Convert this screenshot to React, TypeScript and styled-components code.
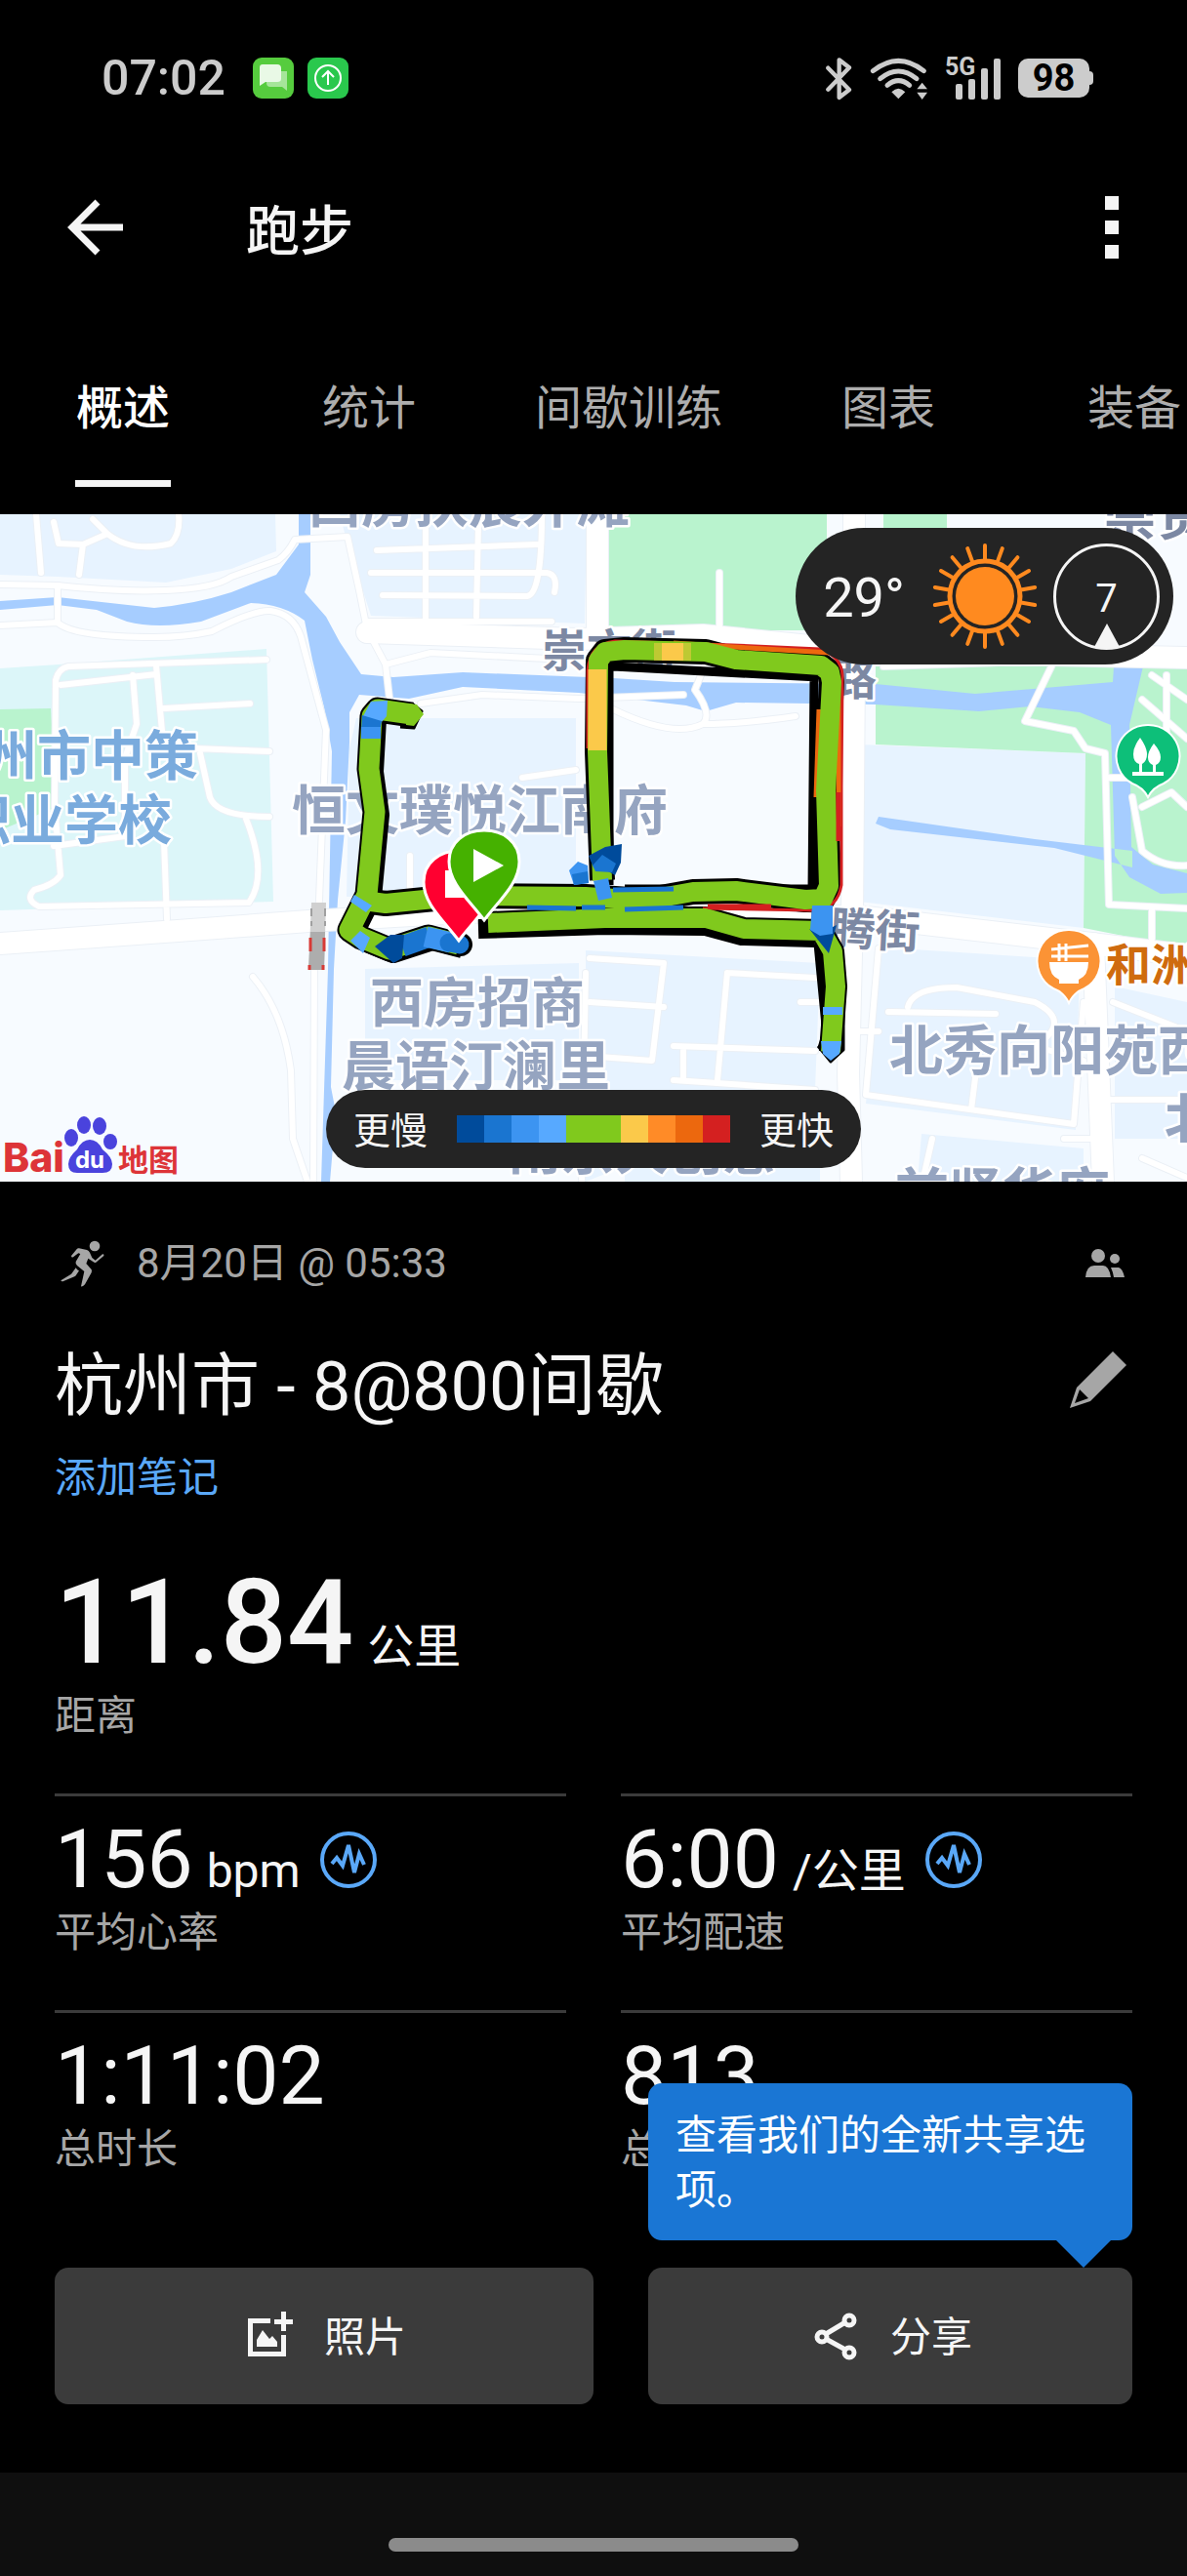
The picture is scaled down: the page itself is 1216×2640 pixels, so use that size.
import React from "react";
import styled, { createGlobalStyle } from "styled-components";

const white = "#f5f5f5";
const muted = "#a6a6a6";
const panel = "#3b3b3b";
const accent = "#1a76d4";
const link = "#5aa8f8";

const GlobalStyle = createGlobalStyle`
  * { box-sizing: border-box; }
  html, body { margin: 0; background: #000; }
  body, button, input {
    font-family: Roboto, "Noto Sans CJK SC", sans-serif;
  }
  button {
    margin: 0;
    padding: 0;
    border: 0;
    background: none;
    color: inherit;
    cursor: pointer;
  }
  svg { display: block; flex: none; }
`;

const Page = styled.div`
  display: flex;
  flex-direction: column;
  min-height: 100vh;
  color: ${white};
  background: #000;
  overflow: hidden;
`;

/* ---------- status bar ---------- */

const StatusBar = styled.div`
  display: flex;
  justify-content: space-between;
  align-items: center;
  height: 160px;
  padding: 0 96px 0 104px;
  color: #cccccc;
`;

const StatusGroup = styled.div<{ $gap: number }>`
  display: flex;
  align-items: center;
  gap: ${(p) => p.$gap}px;
`;

const Clock = styled.time`
  margin-right: 14px;
  font-size: 50px;
  line-height: 56px;
  font-weight: 500;
`;

const Battery = styled.div`
  display: flex;
  align-items: center;

  &::after {
    content: "";
    width: 4px;
    height: 14px;
    border-radius: 0 4px 4px 0;
    background: #cccccc;
  }
`;

const BatteryLevel = styled.span`
  width: 73px;
  border-radius: 10px;
  background: #cccccc;
  color: #000;
  font-size: 38px;
  line-height: 40px;
  font-weight: 700;
  text-align: center;
`;

/* ---------- header and tabs ---------- */

const Header = styled.header`
  display: flex;
  align-items: center;
  height: 146px;
  padding: 0 56px;
`;

const HeaderTitle = styled.h1`
  flex: 1;
  margin: 0 0 0 112px;
  padding-top: 8px;
  font-size: 55px;
  line-height: 72px;
  font-weight: 500;
`;

const IconButton = styled.button`
  display: flex;
  flex: none;
`;

const MenuButton = styled(IconButton)`
  padding: 0 14px;
`;

const Tabs = styled.nav`
  display: flex;
  overflow: hidden;
`;

const Tab = styled.button<{ $active?: boolean }>`
  display: flex;
  flex: none;
  flex-direction: column;
  align-items: center;
  min-width: 252px;
  padding: 77px 44px 28px;
  color: ${(p) => (p.$active ? "#ffffff" : "#adadad")};
  font-size: 48px;
  line-height: 72px;
  font-weight: ${(p) => (p.$active ? 500 : 400)};

  &::after {
    content: "";
    width: 98px;
    height: 7px;
    margin-top: 37px;
    background: ${(p) => (p.$active ? white : "transparent")};
  }
`;

/* ---------- map ---------- */

const MapPanel = styled.section`
  position: relative;
  height: 684px;
  background: #f7fbff;
  overflow: hidden;
`;

const MapDrawing = styled.svg`
  width: 100%;
  height: 100%;
`;

const Pill = styled.div`
  display: flex;
  align-items: center;
  border-radius: 70px;
  background: #242424;
`;

const Weather = styled(Pill)`
  position: absolute;
  top: 14px;
  right: 14px;
  height: 140px;
  padding: 0 14px 0 28px;
  gap: 16px;
`;

const Temperature = styled.span`
  margin-right: 12px;
  padding-top: 4px;
  font-size: 56px;
  line-height: 64px;
`;

const Wind = styled.div`
  position: relative;
  display: grid;
  place-items: center;
  width: 109px;
  height: 109px;
  padding-top: 6px;
  border: 3px solid ${white};
  border-radius: 50%;
  font-size: 40px;
  line-height: 40px;

  &::after {
    content: "";
    position: absolute;
    bottom: 0;
    left: calc(50% - 13px);
    border: 13px solid transparent;
    border-top-width: 0;
    border-bottom: 24px solid ${white};
  }
`;

const LegendAnchor = styled.div`
  position: absolute;
  bottom: 14px;
  left: 0;
  right: 0;
  display: flex;
  justify-content: center;
`;

const Legend = styled(Pill)`
  height: 80px;
  padding: 0 28px;
  gap: 30px;
  font-size: 38px;
  line-height: 56px;
`;

const LegendText = styled.span`
  padding-top: 4px;
`;

const Scale = styled.div`
  display: flex;
  height: 28px;
`;

const Swatch = styled.span<{ $color: string }>`
  width: 28px;
  background: ${(p) => p.$color};
`;

const MapLogo = styled.div`
  position: absolute;
  left: 4px;
  bottom: 4px;
`;

/* ---------- details ---------- */

const Details = styled.main`
  flex: 1;
  padding: 56px 56px 70px;
`;

const MetaRow = styled.div`
  display: flex;
  align-items: center;
  gap: 26px;
  color: ${muted};
  font-size: 42px;
  line-height: 56px;
`;

const MetaDate = styled.span`
  flex: 1;
`;

const TitleRow = styled.div`
  display: flex;
  justify-content: space-between;
  align-items: flex-start;
  margin-top: 56px;
`;

const Title = styled.h2`
  margin: 0;
  font-size: 70px;
  line-height: 84px;
  font-weight: 400;
`;

const NoteLink = styled.a`
  display: block;
  width: max-content;
  margin-top: 24px;
  color: ${link};
  font-size: 42px;
  line-height: 56px;
  text-decoration: none;
`;

const Label = styled.div`
  color: ${muted};
  font-size: 42px;
  line-height: 56px;
`;

const Unit = styled.span`
  font-size: 48px;
  line-height: 56px;
  font-weight: 400;
`;

const Distance = styled.div`
  display: flex;
  align-items: baseline;
  gap: 14px;
  height: 120px;
  margin: 60px 0 8px;
  font-size: 120px;
  line-height: 120px;
  font-weight: 500;
`;

const Stats = styled.div`
  display: grid;
  grid-template-columns: 1fr 1fr;
  gap: 51px 56px;
  margin-top: 51px;
`;

const Stat = styled.div`
  padding-top: 23px;
  border-top: 3px solid ${panel};
`;

const StatRow = styled.div`
  display: flex;
  align-items: center;
  gap: 20px;
  height: 84px;
  margin-bottom: 5px;
`;

const StatValue = styled.div`
  display: flex;
  align-items: baseline;
  gap: 14px;
  font-size: 84px;
  line-height: 84px;
`;

const Actions = styled.div`
  display: grid;
  grid-template-columns: 552fr 496fr;
  gap: 56px;
  margin-top: 93px;
`;

const ActionSlot = styled.div`
  position: relative;
`;

const Action = styled.button`
  display: flex;
  justify-content: center;
  align-items: center;
  gap: 28px;
  width: 100%;
  height: 140px;
  border-radius: 14px;
  background: ${panel};
  font-size: 42px;
  line-height: 56px;
`;

const ActionText = styled.span`
  padding-top: 4px;
`;

const Tooltip = styled.div`
  position: absolute;
  left: 0;
  right: 0;
  bottom: calc(100% + 28px);
  padding: 26px 28px 23px;
  border-radius: 14px;
  background: ${accent};
  color: #fff;
  font-size: 42px;
  line-height: 56px;

  &::after {
    content: "";
    position: absolute;
    top: 100%;
    right: 22px;
    border: 28px solid transparent;
    border-top-color: ${accent};
    border-bottom-width: 0;
  }
`;

const NavBar = styled.footer`
  display: flex;
  justify-content: center;
  height: 106px;
  padding-top: 67px;
  background: #0f0f0f;
`;

const NavHandle = styled.div`
  width: 420px;
  height: 14px;
  border-radius: 7px;
  background: #8b8b8b;
`;

/* ---------- icons ---------- */

const MessageIcon = () => (
  <svg width="42" height="42" viewBox="0 0 42 42">
    <rect width="42" height="42" rx="9" fill="#56cc3e" />
    <path d="M14 14h21v20l-5-4H18q-4 0-4-4z" fill="#a6e59a" />
    <path d="M10 7h15q4 0 4 4v11q0 3-4 3H13l-6 4V10q0-3 3-3z" fill="#e9f9e6" />
  </svg>
);

const UploadIcon = () => (
  <svg width="42" height="42" viewBox="0 0 42 42">
    <rect width="42" height="42" rx="9" fill="#2ac84d" />
    <g fill="none" stroke="#fff" strokeWidth="2">
      <circle cx="21" cy="21" r="13" />
      <path d="M21 28V14M15 20l6-6 6 6" />
    </g>
  </svg>
);

const BluetoothIcon = () => (
  <svg width="27" height="45" viewBox="0 0 81 135" fill="none" stroke="#ccc" strokeWidth="13" strokeLinecap="round" strokeLinejoin="round">
    <path d="M7 35 72 102 41 126V10L72 34 7 101" />
  </svg>
);

const WifiIcon = () => (
  <svg width="60" height="45" viewBox="0 0 180 135">
    <g fill="none" stroke="#ccc" strokeWidth="15" strokeLinecap="round">
      <path d="M10 44Q88-18 166 44" />
      <path d="M32 68Q88 22 144 68" />
      <path d="M54 88Q88 60 122 88" />
    </g>
    <path d="M88 130 67 109Q88 88 109 109zM161 80l16 20h-32zM161 132l16-22h-32z" fill="#ccc" />
  </svg>
);

const SignalIcon = () => (
  <svg width="56" height="45" viewBox="0 0 56 45" fill="#ccc" overflow="visible">
    <text x="-1" y="19" fontFamily="Roboto, sans-serif" fontWeight="700" fontSize="25">5G</text>
    <rect x="10" y="28" width="7" height="16" rx="2" />
    <rect x="23" y="23" width="7" height="21" rx="2" />
    <rect x="36" y="12" width="7" height="32" rx="2" />
    <rect x="49" y="2" width="7" height="42" rx="2" />
  </svg>
);

const BackIcon = () => (
  <svg width="84" height="84" viewBox="0 0 84 84" fill="none" stroke={white} strokeWidth="7">
    <path d="M70 42H18M44 16 18 42l26 26" />
  </svg>
);

const MoreIcon = () => (
  <svg width="14" height="64" viewBox="0 0 14 64" fill={white}>
    <path d="M0 0h14v14H0zM0 25h14v14H0zM0 50h14v14H0z" />
  </svg>
);

const SunIcon = () => (
  <svg width="108" height="108" viewBox="-54 -54 108 108">
    <circle r="30" fill="#ff8a1f" />
    <circle r="36" fill="none" stroke="#ff8a1f" strokeWidth="5" />
    {Array.from({ length: 18 }, (_, i) => (
      <path key={i} d="M0-36V-52" stroke="#ff8a1f" strokeWidth="4" strokeLinecap="round" transform={`rotate(${i * 20})`} />
    ))}
  </svg>
);

const RunnerIcon = () => (
  <svg width="58" height="56" viewBox="-21 0 174 168" fill={muted}>
    <circle cx="102" cy="30" r="16" />
    <path d="M48 38Q50 36 54 37L78 42Q84 44 87 50L94 66 104 74 126 55Q132 54 130 60L106 80Q102 82 98 79L82 68 76 84 92 102Q94 106 92 112L72 148Q66 156 60 154L70 108 48 90Q42 84 44 78L58 54 52 52 36 64Q30 66 30 60z" />
    <path d="M44 97Q48 104 54 106L46 118Q44 122 40 124L6 138Q0 140-2 136L30 116z" />
  </svg>
);

const PeopleIcon = () => (
  <svg width="56" height="56" viewBox="0 0 56 56" fill={muted}>
    <circle cx="21" cy="20" r="7" />
    <circle cx="38" cy="23" r="5" />
    <path d="M8 42Q9 30 17 30h9q6 0 8 12zM34 32h8q4 1 6 10H37q-1-6-3-10z" />
  </svg>
);

const PencilIcon = () => (
  <svg width="70" height="70" viewBox="0 0 70 70">
    <path d="M50 6 64 20 27 57 6 64 13 43z" fill={muted} />
    <path d="M16 45 25 54 11 59z" fill="#000" />
  </svg>
);

const PulseIcon = () => (
  <svg width="58" height="58" viewBox="0 0 58 58" fill="none" stroke={link}>
    <circle cx="29" cy="29" r="27" strokeWidth="4" />
    <path d="M12 33l5-6 6 8 6-21 6 28 5-19 5 11" strokeWidth="4" />
  </svg>
);

const PhotoIcon = () => (
  <svg width="56" height="56" viewBox="0 0 56 56" fill={white}>
    <path d="M6 10h23v5H11v29h29V27h5v22H6zM40 3h5v8h7v5h-7v7h-5v-7h-7v-5h7zM15 39v-7l6-10 7 9 3-3 5 6v5z" />
  </svg>
);

const ShareIcon = () => (
  <svg width="56" height="56" viewBox="0 0 56 56" fill="none" stroke={white} strokeWidth="5">
    <path d="M18 26 38 14M18 31 38 42" />
    <circle cx="14" cy="29" r="5" />
    <circle cx="42" cy="12" r="5" />
    <circle cx="42" cy="45" r="5" />
  </svg>
);

const BaiduLogo = () => (
  <svg width="182" height="64" viewBox="0 0 182 64" role="img" aria-label="Baidu 地图">
    <g fontFamily='Inter, "Noto Sans CJK SC", sans-serif'>
      <text x="-1" y="58" fontSize="41" fontWeight="800" fill="#dd3438">Bai</text>
      <g fill="#4a43dd">
        <ellipse cx="69" cy="23" rx="7" ry="9" />
        <ellipse cx="82" cy="10" rx="7" ry="9" />
        <ellipse cx="98" cy="11" rx="7" ry="9" />
        <ellipse cx="109" cy="27" rx="7" ry="8" />
        <path d="M88 25q8 0 13 10 10 8 10 15 0 9-10 9H75q-9 0-9-9 0-7 9-15 5-10 13-10z" />
      </g>
      <text x="88" y="54" fontSize="24" fontWeight="700" fill="#fff" textAnchor="middle">du</text>
      <text x="117" y="57" fontSize="31" fontWeight="700" fill="#dd3438">地图</text>
    </g>
  </svg>
);

/* ---------- map artwork ---------- */

type Place = { text: string; x: number; y: number; size?: number; color?: string; turn?: number };

const grey = "#95a4c0";
const slate = "#7c88a3";
const school = "#7aabdd";

const places: Place[] = [
  { text: "西房扶宸外滩", x: 315, y: 8 },
  { text: "杭州市中策", x: -72, y: 267, color: school },
  { text: "职业学校", x: -44, y: 333, color: school },
  { text: "恒文璞悦江南府", x: 299, y: 323 },
  { text: "西房招商", x: 379, y: 520 },
  { text: "晨语汀澜里", x: 350, y: 585 },
  { text: "南京大创意", x: 520, y: 671 },
  { text: "前贤华府", x: 917, y: 715 },
  { text: "北秀向阳苑西", x: 911, y: 569 },
  { text: "北", x: 1193, y: 639 },
  { text: "崇贤", x: 1130, y: 21, color: slate },
  { text: "崇文街", x: 555, y: 156, size: 46, color: slate },
  { text: "路", x: 852, y: 185, size: 46, color: slate },
  { text: "飞腾街", x: 804, y: 438, size: 46, color: slate, turn: 3 },
  { text: "和洲", x: 1133, y: 478, size: 46, color: "#cf6b0e" },
];

const wideRoads = [
  "M0 440 182 427 316 417 475 408 620 404 887 413 1110 439 1216 452",
  "M376 121 593 128 720 124 880 140 1216 147",
  "M875 0V160L873 410 869 573 872 684",
  "M612 0V120",
  "M1120 440 1130 684",
];

const roads = [
  "M0 72 59 73Q120 80 170 78T237 64L285 47Q295 40 302 26L356 23 368 78 376 118 395 154 399 189",
  "M0 114 59 111Q75 126 158 126 190 126 217 120 260 98 277 99 300 102 308 125L334 221 327 395 322 466 321 684",
  "M37 0 42 60",
  "M59 73V111",
  "M81 62 85 31 60 30 55 8M85 31 110 20 95 5M110 20Q135 40 175 30 185 20 183 0",
  "M386 37 550 31M380 60 560 60Q572 62 568 80M392 83 540 84Q555 82 555 0M376 110 565 110M436 10V120M490 10 488 105",
  "M395 154 441 142 600 150",
  "M431 194 494 185 593 189 700 185",
  "M56 300 57 170Q60 158 70 156L273 149M62 175 160 164M160 155 168 245M168 199 256 194M136 165 140 215 128 250V330L55 340M200 240 276 243M205 245 215 290Q222 310 276 310M56 300 62 370Q55 380 35 385 25 395 40 402L255 398Q275 370 252 312M168 335 171 415",
  "M259 474Q290 510 298 570L300 640 315 684",
  "M535 270 590 262M420 350V385",
  "M604 455 680 460 668 560 600 555M604 500 680 505M745 470 835 475M745 470 735 580M690 545 835 550M690 580 835 590M820 500H840M700 550V580",
  "M737 60V120M724 150 712 180Q730 205 720 215 690 230 628 200M720 215Q760 215 815 207",
  "M905 156 1080 150 1050 212 1100 222 1112 240 1132 245 1136 400 1216 404M1136 270 1170 270M1180 405V435M1160 290 1170 345Q1190 362 1216 360M1170 300 1200 285 1216 300M1170 190 1216 230M1195 165V240M1180 165 1216 190",
  "M900 445 887 595 1100 625 1110 500M930 505Q935 485 980 485L1060 500Q1100 520 1060 545L1110 560M910 510 1020 512M1000 570 995 610M1140 500 1216 530M1135 600H1216M955 640 945 684M1090 640H1130M1170 660 1216 680",
  "M600 470 596 684M875 530H900M608 640 850 650",
];

const pace = {
  green: "#80c91d",
  yellow: "#fbc94a",
  orange: "#ec680e",
  red: "#d42020",
  navy: "#004b9b",
  blue: "#1a75d0",
  sky: "#3c94f1",
  light: "#57a9ff",
};

const legendColors = [
  pace.navy, pace.blue, pace.sky, pace.light, pace.green,
  pace.green, pace.yellow, "#ff8b27", pace.orange, pace.red,
];

const west = "M422 205 387 200 381 207 378 261 384 305 376 390 358 426 370 434 399 446 439 433 470 441";
const loop = "M380 397 395 399 475 391 600 392 660 396 710 387 754 386 825 395 843 394 849 381 846 283 852 172 850 162 841 155 754 149 723 141 640 139 620 141 613 150 612 243 617 375";
const south = "M500 419 620 414 723 414 762 425 841 427 853 448 856 484 851 551";

const pin = "M496 416C480 395 460 378 460 356C460 336 476 324 496 324C516 324 532 336 532 356C532 378 512 395 496 416Z";

const MapArt = () => (
  <MapDrawing viewBox="0 0 1216 684" preserveAspectRatio="xMidYMid slice" aria-hidden="true">
    <rect width="1216" height="684" fill="#f7fbff" />
    <g fill="#e7f3ff">
      <path d="M0 0H282L283 38 237 56 170 70 59 64 0 62zM348 0H601L599 112 380 104 356 30zM365 209H590V392H355L358 240zM374 466 593 460V580H374z" />
      <path d="M600 447 840 460 835 590 600 684zM904 444 1106 457 1102 631 887 604zM1142 484 1216 500V640H1142zM944 635 1110 650V684H940zM880 236 1112 245 1110 424 880 397zM640 640H840V684H640z" />
    </g>
    <path d="M0 158 60 154 273 138 280 397 0 406z" fill="#dcf6f9" />
    <path d="M0 200 52 199 58 300 0 324zM622 0H847V119H622zM905 0H970V40H905zM897 156H1216V445L1110 424 1112 245 897 236z" fill="#b9f3ce" />
    <path
      d="M306 0V31L283 62 237 80Q200 92 158 96L59 85 0 89V98L59 93 99 98 130 110Q160 118 206 110L257 91Q290 92 312 109L320 149 332 198 340 243 338 350 336 466 329 684H338L344 613 339 587 342 466 346 395 354 314 358 234V203L368 185 419 189 474 177 593 183 703 196 723 202 754 193 897 195 1003 202 1055 197 1106 203 1138 216 1142 350 1157 372 1189 389 1216 388V368L1181 359 1159 341 1157 216 1171 156H1141L1140 172 1070 178 999 184 897 174 691 172 628 168 474 162 403 167 370 164 348 131 334 105 312 80 318 62V0zM897 317 900 310 1060 333 1160 345 1160 362 1080 342 912 323z"
      fill="#a6cdff"
    />
    <g fill="none" strokeLinejoin="round" strokeLinecap="round">
      <g stroke="#ebf0f6">
        {wideRoads.map((d) => <path key={d} d={d} strokeWidth="24" />)}
        {roads.map((d) => <path key={d} d={d} strokeWidth="8" />)}
      </g>
      <g stroke="#ffffff">
        {wideRoads.map((d) => <path key={d} d={d} strokeWidth="22" />)}
        {roads.map((d) => <path key={d} d={d} strokeWidth="6" />)}
      </g>
    </g>
    <path d="M319 398H334L332 467H316z" fill="#d0d0d0" />
    <path d="M318 428H333L332 467H316z" fill="#adadad" />
    <path d="M319 404V422M333 404V422" stroke="#a0a0a0" strokeWidth="2" strokeDasharray="8 5" />
    <path d="M318 434V448M332 434V448M317 462V467M331 462V467" stroke="#d73a36" strokeWidth="3" />

    <g fontFamily='"Noto Sans CJK SC", sans-serif' fontWeight="700" stroke="#fff" strokeWidth="5" strokeLinejoin="round" paintOrder="stroke">
      {places.map(({ text, x, y, size = 55, color = grey, turn = 0 }) => (
        <text key={text + x} x={x} y={y} fontSize={size} fill={color} transform={`rotate(${turn} ${x} ${y})`}>{text}</text>
      ))}
    </g>

    <g fill="none" strokeLinejoin="round">
      <g stroke="#000">
        <path d={west} strokeWidth="25" />
        <path d={west} strokeWidth="22" transform="translate(4 3)" />
        <path d="M460 439 472 441" strokeWidth="24" strokeLinecap="round" />
        <path d={loop} strokeWidth="26" />
        <path d={south} strokeWidth="24" />
        <path d="M490 425 620 421 723 422 760 432 835 434" strokeWidth="20" />
        <path d="M624 152V380M628 156 838 167M834 168 832 385M640 384 830 384M838 440 848 545" strokeWidth="9" />
      </g>
      <path d="M422 194 432 202 424 219 410 218M838 545 851 561 864 549V460" fill="#000" stroke="#000" strokeWidth="3" />
      <path d="M602 240V160Q604 133 630 130L750 134 840 138Q862 146 863 165L862 280V380Q858 404 835 406L720 404" stroke={pace.red} strokeWidth="3" />
      <path d="M690 132 750 136 850 142M839 200 836 290M859 170V320" stroke={pace.orange} strokeWidth="5" />
      <path d={loop} stroke={pace.green} strokeWidth="20" />
      <path d={west} stroke={pace.green} strokeWidth="21" />
      <path d={south} stroke={pace.green} strokeWidth="20" />
      <path d="M612 159V242" stroke={pace.yellow} strokeWidth="19" />
      <path d="M678 141 700 141" stroke={pace.yellow} strokeWidth="18" />
      <path d="M670 141H678M700 141H708" stroke={pace.yellow} strokeOpacity="0.5" strokeWidth="18" />
      <path d="M859 285V335M725 402 790 402" stroke={pace.red} strokeWidth="5" />
      <path d="M628 385 690 384M540 403 590 404M596 403H620M640 405 700 403" stroke={pace.blue} strokeWidth="5" />
      <path d="M412 443 440 433" stroke={pace.blue} strokeWidth="21" />
      <path d="M436 433 462 439" stroke={pace.sky} strokeWidth="21" />
      <path d="M460 439 471 441" stroke={pace.blue} strokeWidth="19" strokeLinecap="round" />
      <path d="M853 505V513" stroke={pace.light} strokeWidth="20" />
    </g>
    <path d="M427 195 434 205 424 217 416 216 416 194z" fill={pace.green} />
    <path d="M841 540H862L860 553 851 560 843 553z" fill={pace.light} />
    <path d="M372 207 380 192 397 191 396 207 390 214 373 211z" fill={pace.light} />
    <path d="M371 206 391 212 390 218 370 222z" fill={pace.blue} />
    <path d="M370 218H390V230H370z" fill={pace.sky} />
    <path d="M363 390 381 401 375 408 359 397zM359 437 369 427 379 434 372 450z" fill={pace.light} />
    <path d="M384 443 400 431H414L412 455 403 460z" fill={pace.navy} />
    <path d="M603 350 620 341 637 338 636 357 630 370 618 363 607 360zM829 425 839 430 857 421 849 450z" fill={pace.navy} />
    <path d="M607 360 617 349 631 358 627 367 610 366z" fill={pace.blue} />
    <path d="M583 365 592 356 602 360 603 378 588 380zM608 376 623 373 627 393 613 396zM832 401H853V430L840 432 830 426z" fill={pace.sky} />
    <path d="M586 369 602 366 603 378 588 380z" fill={pace.blue} />

    <g stroke="#fff" strokeWidth="3">
      <path d={pin} fill="#ff0030" transform="translate(-26 21)" />
      <path d="M456 365H485V393H456z" fill="#fff" stroke="none" />
      <path d={pin} fill="#45b100" />
    </g>
    <path d="M485 343 516 360 485 377z" fill="#fff" />

    <path d="M1176 216a32 32 0 0 1 16 60q-11 4-16 14-5-10-16-14a32 32 0 0 1 16-60z" fill="#0dbf79" stroke="#fff" strokeWidth="2" />
    <path d="M1168 229q7 10 7 17t-5 10v8h11v-7q-5-2-5-8t6-14q7 8 7 14t-5 8v7h8v4h-32v-4h7v-8q-6-2-6-10t7-17z" fill="#fff" />
    <path d="M1095 426a32 32 0 0 1 16 60q-11 4-16 15-5-11-16-15a32 32 0 0 1 16-60z" fill="#fb9335" stroke="#fff" strokeWidth="2" />
    <path d="M1075 459h40q0 14-10 18v4h-20v-4q-10-4-10-18z" fill="#fff" />
    <path d="M1077 446 1115 442M1077 453H1115M1085 440V458M1092 440V458" stroke="#fff" strokeWidth="3" />
  </MapDrawing>
);

/* ---------- page ---------- */

const tabs = ["概述", "统计", "间歇训练", "图表", "装备"];

const stats = [
  { value: "156", unit: "bpm", label: "平均心率", chart: true },
  { value: "6:00", unit: "/公里", label: "平均配速", chart: true },
  { value: "1:11:02", label: "总时长" },
  { value: "813", label: "总卡路里" },
];

export default function App() {
  return (
    <Page>
      <GlobalStyle />
      <StatusBar>
        <StatusGroup $gap={14}>
          <Clock>07:02</Clock>
          <MessageIcon />
          <UploadIcon />
        </StatusGroup>
        <StatusGroup $gap={18}>
          <BluetoothIcon />
          <WifiIcon />
          <SignalIcon />
          <Battery><BatteryLevel>98</BatteryLevel></Battery>
        </StatusGroup>
      </StatusBar>

      <Header>
        <IconButton aria-label="返回"><BackIcon /></IconButton>
        <HeaderTitle>跑步</HeaderTitle>
        <MenuButton aria-label="更多"><MoreIcon /></MenuButton>
      </Header>

      <Tabs>
        {tabs.map((name, i) => (
          <Tab key={name} $active={i === 0}>{name}</Tab>
        ))}
      </Tabs>

      <MapPanel>
        <MapArt />
        <MapLogo><BaiduLogo /></MapLogo>
        <Weather>
          <Temperature>29°</Temperature>
          <SunIcon />
          <Wind>7</Wind>
        </Weather>
        <LegendAnchor>
          <Legend>
            <LegendText>更慢</LegendText>
            <Scale>
              {legendColors.map((color, i) => <Swatch key={i} $color={color} />)}
            </Scale>
            <LegendText>更快</LegendText>
          </Legend>
        </LegendAnchor>
      </MapPanel>

      <Details>
        <MetaRow>
          <RunnerIcon />
          <MetaDate>8月20日 @ 05:33</MetaDate>
          <PeopleIcon />
        </MetaRow>
        <TitleRow>
          <Title>杭州市 - 8@800间歇</Title>
          <IconButton aria-label="编辑"><PencilIcon /></IconButton>
        </TitleRow>
        <NoteLink href="#notes">添加笔记</NoteLink>

        <Distance>11.84<Unit>公里</Unit></Distance>
        <Label>距离</Label>

        <Stats>
          {stats.map(({ value, unit, label, chart }) => (
            <Stat key={label}>
              <StatRow>
                <StatValue>{value}{unit && <Unit>{unit}</Unit>}</StatValue>
                {chart && <IconButton aria-label={label}><PulseIcon /></IconButton>}
              </StatRow>
              <Label>{label}</Label>
            </Stat>
          ))}
        </Stats>

        <Actions>
          <ActionSlot>
            <Action><PhotoIcon /><ActionText>照片</ActionText></Action>
          </ActionSlot>
          <ActionSlot>
            <Tooltip role="tooltip">查看我们的全新共享选项。</Tooltip>
            <Action><ShareIcon /><ActionText>分享</ActionText></Action>
          </ActionSlot>
        </Actions>
      </Details>

      <NavBar><NavHandle /></NavBar>
    </Page>
  );
}
